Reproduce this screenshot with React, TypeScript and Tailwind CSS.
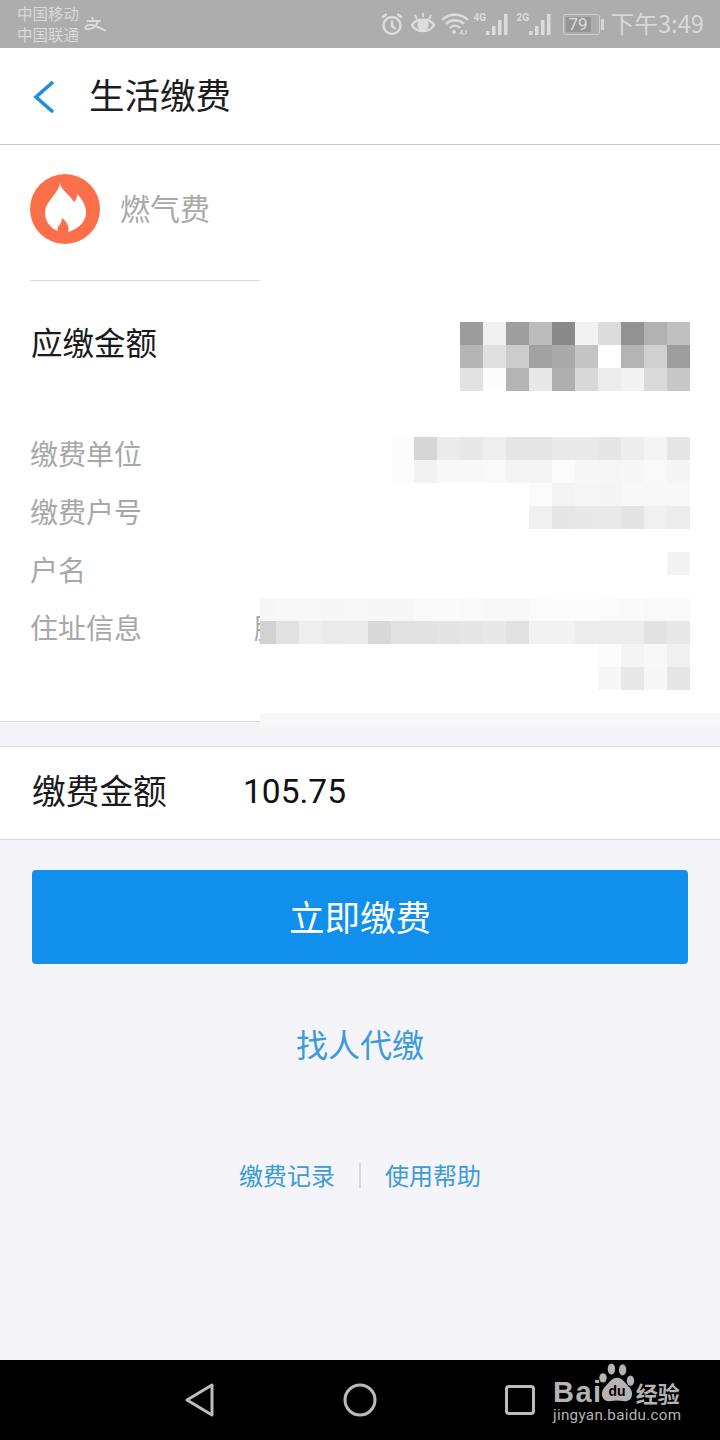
const CJK = "font-['Noto_Sans_CJK_SC','Roboto',sans-serif]";

const amountCells = [
  ["9c", "f0", "9e", "bc", "8a", "f2", "dc", "92", "b2", "c0"],
  ["b5", "e0", "cc", "a2", "aa", "c4", "ff", "b4", "d0", "9e"],
  ["e2", "fc", "b4", "e8", "af", "d8", "ec", "f2", "da", "c8"],
];

// ff = blank, first column is narrower (cut off at x=260)
const infoCells = [
  ["ff", "ff", "ff", "ff", "ff", "ff", "fc", "d6", "eb", "e8", "ee", "e5", "e5", "e9", "e9", "e6", "ed", "f4", "e6"],
  ["ff", "ff", "ff", "ff", "ff", "ff", "fc", "f2", "f8", "f8", "f9", "f4", "f4", "fb", "f7", "f6", "f7", "f9", "f5"],
  ["ff", "ff", "ff", "ff", "ff", "ff", "ff", "ff", "ff", "ff", "ff", "ff", "fb", "f4", "f6", "f5", "f8", "f8", "f8"],
  ["ff", "ff", "ff", "ff", "ff", "ff", "ff", "ff", "ff", "ff", "ff", "ff", "f0", "e6", "e8", "e9", "e4", "f0", "ec"],
  ["ff", "ff", "ff", "ff", "ff", "ff", "ff", "ff", "ff", "ff", "ff", "ff", "ff", "ff", "ff", "ff", "ff", "ff", "ff"],
  ["ff", "ff", "ff", "ff", "ff", "ff", "ff", "ff", "ff", "ff", "ff", "ff", "ff", "ff", "ff", "ff", "ff", "ff", "f3"],
  ["ff", "ff", "ff", "ff", "ff", "ff", "ff", "ff", "ff", "ff", "ff", "ff", "ff", "ff", "ff", "ff", "ff", "ff", "ff"],
  ["f7", "f8", "f8", "f7", "f8", "f7", "f7", "fa", "fa", "f9", "f8", "f8", "fb", "fc", "fc", "fb", "fa", "f9", "f9"],
  ["d2", "e2", "ee", "ea", "eb", "d9", "e2", "e2", "e4", "e6", "e8", "e2", "f2", "f2", "ec", "ec", "ec", "e2", "e8"],
  ["ff", "ff", "ff", "ff", "ff", "ff", "ff", "ff", "ff", "ff", "ff", "ff", "ff", "ff", "ff", "fc", "f4", "f8", "f0"],
  ["ff", "ff", "ff", "ff", "ff", "ff", "ff", "ff", "ff", "ff", "ff", "ff", "ff", "ff", "ff", "f7", "e8", "f7", "e6"],
];

function Mosaic({ rows, className }: { rows: string[][]; className: string }) {
  return (
    <div className={`grid auto-rows-[23px] ${className}`}>
      {rows.flat().map((g, i) => (
        <div key={i} style={{ backgroundColor: `#${g}${g}${g}` }} />
      ))}
    </div>
  );
}

function Signal({ label }: { label: string }) {
  return (
    <div className="relative h-[24px] w-[36px]">
      <span className="absolute left-0 top-[1px] font-['Roboto',sans-serif] text-[10px] font-bold leading-[10px] text-[#dcdcdc]">
        {label}
      </span>
      <svg width="36" height="24" viewBox="0 0 36 24" fill="#dcdcdc" className="absolute left-0 top-0">
        <rect x="12" y="19" width="3.5" height="4" />
        <rect x="18" y="14" width="3.5" height="9" />
        <rect x="24" y="8" width="3.5" height="15" />
        <rect x="30" y="2" width="3.5" height="21" />
      </svg>
    </div>
  );
}

function StatusBar() {
  return (
    <div className={`flex h-12 items-center justify-between bg-[#adadad] pl-[17px] pr-4 ${CJK}`}>
      <div className="flex items-center">
        <div className="text-[15.5px] leading-[21px] text-[#d9d9d9]">
          <div>中国移动</div>
          <div>中国联通</div>
        </div>
        <svg width="24" height="20" viewBox="0 0 24 20" fill="none" stroke="#dcdcdc" strokeWidth="1.8" className="ml-[5px] mt-[1px]">
          <path d="M8 2 L9 6 M3 6 H17 M14 6 C12 13 6 15 2 14 C0 12 3 9 8 10 C13 11 18 14 22 16" />
        </svg>
      </div>
      <div className="flex items-center">
        <svg width="24" height="24" viewBox="0 0 24 24" fill="none" stroke="#dedede" strokeWidth="2.4">
          <circle cx="12" cy="13.5" r="8.5" />
          <path d="M12 8.5 V14 L15.5 17 M2.5 5.5 L6.5 2 M21.5 5.5 L17.5 2" />
        </svg>
        <svg width="26" height="24" viewBox="0 0 26 24" fill="none" stroke="#dedede" strokeWidth="2.4" className="ml-[6px]">
          <path d="M2 13 C6 6 20 6 24 13 C20 21 6 21 2 13 Z" />
          <circle cx="13" cy="13" r="4.5" fill="#dedede" />
          <path d="M5 3 L7 7 M13 1 V5 M21 3 L19 7" strokeWidth="1.8" />
        </svg>
        <svg width="28" height="24" viewBox="0 0 28 24" fill="none" stroke="#dcdcdc" strokeWidth="2.4" className="ml-[5px]">
          <path d="M1 8 C8 1 20 1 27 8 M5 12 C10 7 18 7 23 12 M9 16 C12 13 16 13 19 16" />
          <circle cx="13" cy="20" r="2" fill="#dcdcdc" stroke="none" />
          <path d="M19 22 L21 18 V22 H24 M25 18 V22" strokeWidth="1.2" />
        </svg>
        <div className="ml-[5px] flex gap-[7px]">
          <Signal label="4G" />
          <Signal label="2G" />
        </div>
        <div className="ml-[10px] flex items-center">
          <div className="flex h-[21px] w-[37px] items-center rounded-[3px] border border-[#cfcfcf] p-[2px]">
            <div className="flex h-full w-[25px] items-center justify-center bg-[#959595] font-['Roboto',sans-serif] text-[17px] leading-none text-[#dcdcdc]">
              79
            </div>
          </div>
          <div className="ml-[1px] h-[11px] w-[3px] bg-[#d6d6d6]" />
        </div>
        <span className="ml-[7px] text-[23.7px] leading-none text-[#d9d9d9]">下午3:49</span>
      </div>
    </div>
  );
}

function Header() {
  return (
    <div className="flex h-[97px] items-center border-b border-[#cccccc] bg-white pl-[33px]">
      <svg width="22" height="32" viewBox="0 0 22 32" fill="none" stroke="#1d8fe3" strokeWidth="3.6" className="mt-[2px]">
        <path d="M20 1 L3 16 L20 31" />
      </svg>
      <h1 className={`mb-[4px] ml-[34px] text-[35.5px] leading-none text-[#1d1d1d] ${CJK}`}>生活缴费</h1>
    </div>
  );
}

function BillCard() {
  return (
    <div className={`flex h-[568px] flex-col bg-white ${CJK}`}>
      <div className="flex items-center pl-[30px] pt-[29px]">
        <svg width="70" height="70" viewBox="0 0 70 70">
          <circle cx="35" cy="35" r="35" fill="#fb704a" />
          <path
            d="M30 9 C31 16 40 21 44 28 C46 26 47 24 47 20 C53 26 56 32 56 39 C56 48 48 55 38 58 C40 53 37 48 32 44 C32 49 29 51 28 53 C27 55 28 56 28 57 C20 54 15 47 15 39 C15 27 28 21 30 9 Z"
            fill="#ffffff"
          />
        </svg>
        <span className="mb-[4px] ml-[20px] text-[30px] leading-none text-[#a9a9a9]">燃气费</span>
      </div>
      <div className="ml-[30px] mt-[36px] h-px w-[230px] bg-[#dadada]" />
      <div className="mt-[41px] flex h-[69px] justify-between pl-[31px] pr-[30px]">
        <span className="mt-px text-[31.5px] leading-[36px] text-[#1a1a1a]">应缴金额</span>
        <Mosaic rows={amountCells} className="w-[230px] grid-cols-[repeat(10,23px)]" />
      </div>
      <div className="mt-[46px] flex">
        <div className="-mt-[2px] flex w-[254px] flex-col gap-[22px] pl-[30px] text-[28px] leading-[36px] text-[#a8a8a8]">
          <span>缴费单位</span>
          <span>缴费户号</span>
          <span>户名</span>
          <span>住址信息</span>
        </div>
        <div className="mt-[172px] h-[36px] w-[6px] overflow-hidden text-[28px] leading-[36px] text-[#a8a8a8]">
          腋
        </div>
        <Mosaic rows={infoCells} className="w-[430px] grid-cols-[16px_repeat(18,23px)]" />
      </div>
    </div>
  );
}

function Logo() {
  return (
    <div className="absolute left-[553px] top-[1362px] w-[160px] font-['Liberation_Sans',sans-serif] text-[#b4b4b4]">
      <div className="flex h-[41px] items-end">
        <span className="text-[29px] font-bold leading-[22px] tracking-[1.5px]">Bai</span>
        <svg width="38" height="41" viewBox="0 0 38 44" fill="#b4b4b4" className="ml-[-5px]">
          <ellipse cx="4" cy="17" rx="4" ry="5" />
          <ellipse cx="13" cy="7.5" rx="4" ry="6" />
          <ellipse cx="25" cy="8.5" rx="4" ry="6" />
          <ellipse cx="33.5" cy="20" rx="4" ry="5.5" />
          <path d="M19 17 C25 17 28 23 33 28 C38 35 34 43 27 42 C22 41 16 41 11 42 C4 43 0 35 5 28 C10 23 13 17 19 17 Z" />
          <text x="19" y="37" textAnchor="middle" fontSize="15" fontWeight="700" fill="#000000">du</text>
        </svg>
        <span className={`text-[22px] font-bold leading-[22px] ${CJK}`}>经验</span>
      </div>
      <div className="mt-[2px] font-['Roboto',sans-serif] text-[15.2px] leading-[20px] tracking-[0.3px]">jingyan.baidu.com</div>
    </div>
  );
}

export default function App() {
  return (
    <div className="relative flex h-[1440px] w-[720px] flex-col overflow-hidden bg-[#f4f4f9]">
      <StatusBar />
      <Header />
      <BillCard />
      <div className="flex h-[33px] items-start">
        <div className="h-[9px] w-[260px] border-b border-[#dcdcdc] bg-white" />
        <div className="h-[14px] flex-1 bg-[#f8f8fb]" />
      </div>
      <div className={`flex h-[94px] items-center border-y border-[#dadada] bg-white pl-[32px] ${CJK}`}>
        <span className="mb-[6px] w-[211px] text-[33.7px] leading-none text-[#1a1a1a]">缴费金额</span>
        <span className="mb-[2px] font-['Roboto',sans-serif] text-[33.5px] leading-none text-[#111111]">105.75</span>
      </div>
      <button className={`mx-[32px] mt-[30px] h-[94px] rounded-[4px] bg-[#118fec] pb-[3px] text-[35.5px] text-white ${CJK}`}>
        立即缴费
      </button>
      <div className={`mt-[59px] text-center text-[32px] leading-[40px] text-[#3c9bd8] ${CJK}`}>找人代缴</div>
      <div className={`mt-[97px] flex items-center justify-center text-[24px] leading-[30px] text-[#3c9bd8] ${CJK}`}>
        <span>缴费记录</span>
        <div className="mx-[24px] h-[25px] w-[2px] bg-[#d8d8dc]" />
        <span>使用帮助</span>
      </div>
      <div className="mt-auto flex h-[80px] items-center bg-black">
        <svg width="30" height="34" viewBox="0 0 30 34" fill="none" stroke="#bcbcbc" strokeWidth="3" strokeLinejoin="round" className="ml-[185px]">
          <path d="M27 2 V32 L2 17 Z" />
        </svg>
        <svg width="34" height="34" viewBox="0 0 34 34" fill="none" stroke="#bcbcbc" strokeWidth="3" className="ml-[128px]">
          <circle cx="17" cy="17" r="15" />
        </svg>
        <svg width="30" height="30" viewBox="0 0 30 30" fill="none" stroke="#bcbcbc" strokeWidth="3" className="ml-[128px]">
          <rect x="1.5" y="1.5" width="27" height="27" rx="2.5" />
        </svg>
      </div>
      <Logo />
    </div>
  );
}
